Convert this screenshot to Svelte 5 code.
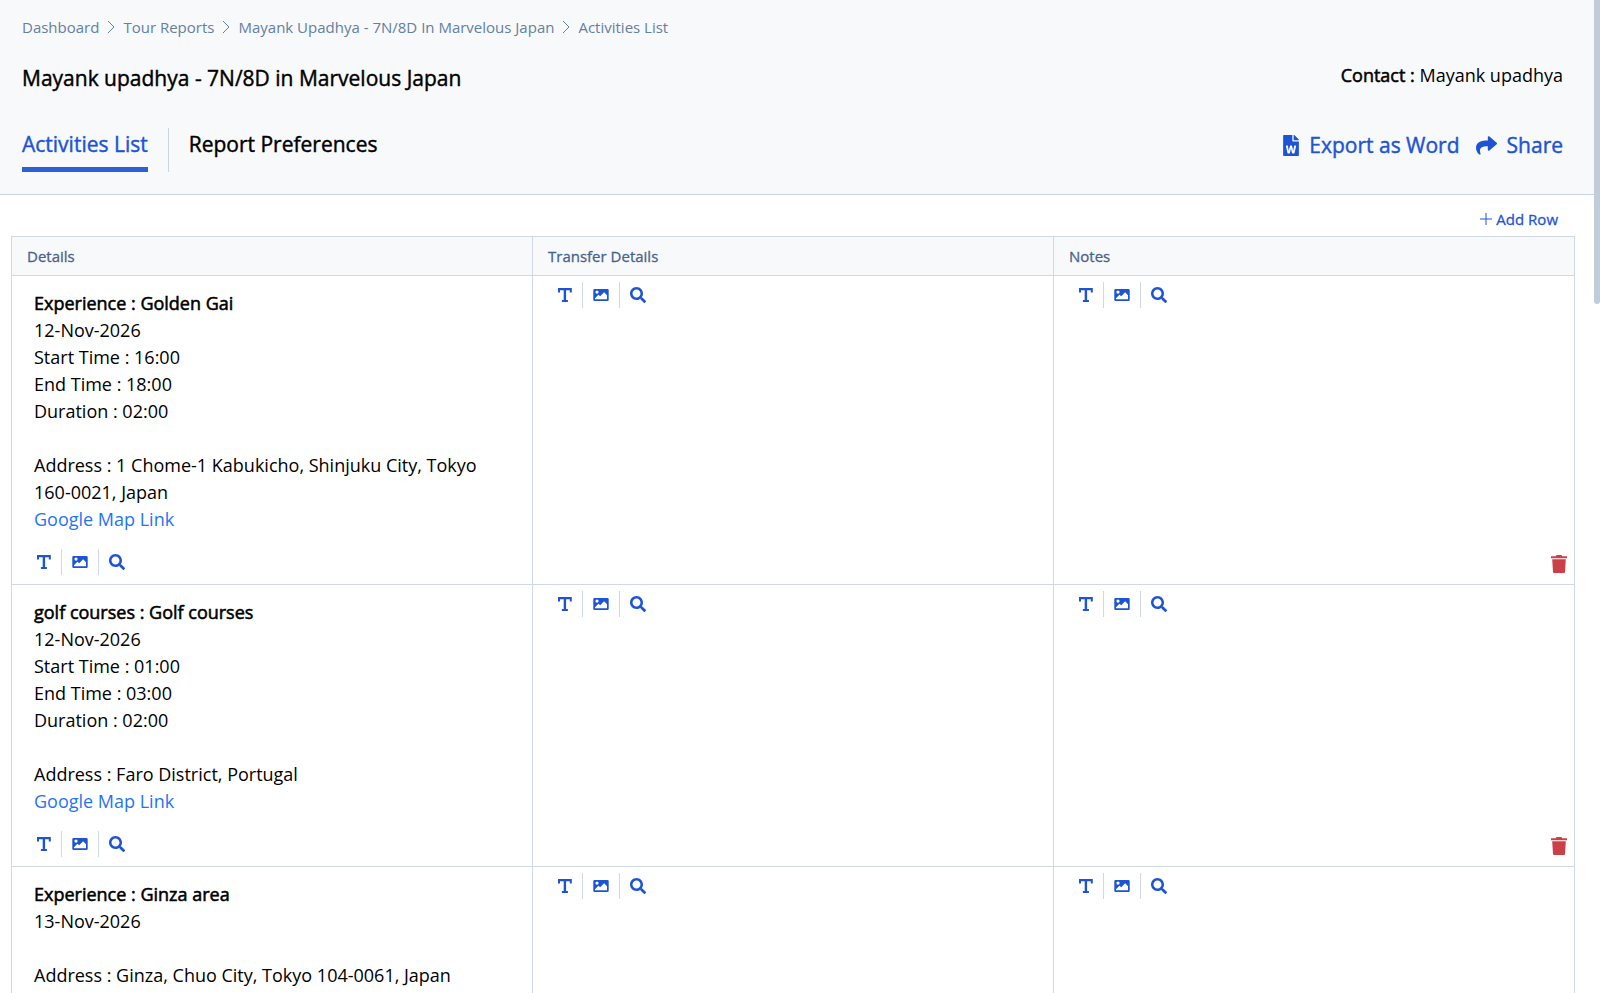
<script>
	let activeTab = "Activities List";

	const crumbs = ["Dashboard", "Tour Reports", "Mayank Upadhya - 7N/8D In Marvelous Japan", "Activities List"];
	const tabs = ["Activities List", "Report Preferences"];
	const columns = ["Details", "Transfer Details", "Notes"];

	let activities = [
		{
			title: "Experience : Golden Gai",
			date: "12-Nov-2026",
			start: "16:00",
			end: "18:00",
			duration: "02:00",
			address: "1 Chome-1 Kabukicho, Shinjuku City, Tokyo 160-0021, Japan",
			map: "#map-golden-gai"
		},
		{
			title: "golf courses : Golf courses",
			date: "12-Nov-2026",
			start: "01:00",
			end: "03:00",
			duration: "02:00",
			address: "Faro District, Portugal",
			map: "#map-golf-courses"
		},
		{
			title: "Experience : Ginza area",
			date: "13-Nov-2026",
			address: "Ginza, Chuo City, Tokyo 104-0061, Japan"
		}
	];

	function addRow() {
		activities = [...activities, { title: "", date: "", address: "" }];
	}

	function removeRow(index) {
		activities = activities.filter((_, i) => i !== index);
	}
</script>

{#snippet toolbar()}
	<div class="toolbar">
		<button aria-label="Add text">
			<svg width="16" height="16" viewBox="0 0 16 16">
				<path d="M2 1h13.800v4.400h-2V3.200H10.100v9.900H11.900v2H5.900v-2H7.700V3.200H4v2.200H2z" />
			</svg>
		</button>
		<button aria-label="Add image">
			<svg width="16" height="16" viewBox="0 0 16 16">
				<path fill-rule="evenodd" d="M1.500 2h13A1.200 1.200 0 0 1 15.700 3.200v9.600a1.200 1.200 0 0 1-1.200 1.200h-13A1.200 1.200 0 0 1 .3 12.800V3.200A1.200 1.200 0 0 1 1.500 2zM4 3.500a1.600 1.600 0 1 0 0 3.200 1.600 1.600 0 0 0 0-3.200zM2 11.300v1h12V8.200l-2.900-2.900L7.200 9.300 5.400 7.700z" />
			</svg>
		</button>
		<button aria-label="Search">
			<svg width="16" height="16" viewBox="0 0 512 512">
				<path d="M505 442.700L405.300 343c-4.500-4.500-10.600-7-17-7H372c27.600-35.300 44-79.700 44-128C416 93.100 322.900 0 208 0S0 93.100 0 208s93.100 208 208 208c48.300 0 92.700-16.400 128-44v16.300c0 6.400 2.500 12.500 7 17l99.700 99.700c9.400 9.400 24.600 9.400 33.900 0l28.300-28.300c9.400-9.400 9.400-24.600.1-34zM208 336c-70.700 0-128-57.200-128-128 0-70.700 57.200-128 128-128 70.700 0 128 57.200 128 128 0 70.700-57.200 128-128 128z" />
			</svg>
		</button>
	</div>
{/snippet}

<div class="page">
	<header>
		<nav class="breadcrumb" aria-label="Breadcrumb">
			{#each crumbs as crumb, i}
				{#if i > 0}
					<svg width="8" height="14" viewBox="0 0 8 14">
						<path d="M1 1l6 6-6 6" />
					</svg>
				{/if}
				<a href="#{i}">{crumb}</a>
			{/each}
		</nav>

		<div class="title-row">
			<h1>Mayank upadhya - 7N/8D in Marvelous Japan</h1>
			<p><b>Contact :</b> Mayank upadhya</p>
		</div>

		<div class="tab-row">
			<div class="tabs">
				{#each tabs as tab}
					<div class="tab">
						<button class:active={activeTab === tab} on:click={() => (activeTab = tab)}>{tab}</button>
					</div>
				{/each}
			</div>
			<div class="actions">
				<button>
					<svg width="16" height="21" viewBox="0 0 384 512">
						<path d="M224 136V0H24C10.700 0 0 10.700 0 24v464c0 13.300 10.700 24 24 24h336c13.300 0 24-10.700 24-24V160H248c-13.200 0-24-10.800-24-24zm57.100 120H305c7.700 0 13.400 7.100 11.700 14.700l-38 168c-1.200 5.500-6.100 9.300-11.700 9.300h-38c-5.500 0-10.300-3.800-11.600-9.100-25.800-103.500-20.800-81.200-25.600-110.500h-.5c-1.100 14.300-2.400 17.400-25.600 110.500-1.300 5.300-6.100 9.100-11.600 9.100H117c-5.600 0-10.500-3.900-11.700-9.400l-37.800-168c-1.700-7.500 4-14.600 11.700-14.600h24.500c5.700 0 10.700 4 11.800 9.700 15.600 78 20.100 109.500 21 122.200 1.600-10.200 7.300-32.700 29.400-122.700 1.300-5.400 6.100-9.100 11.700-9.100h29.100c5.600 0 10.400 3.800 11.700 9.200 24 100.400 28.800 124 29.600 129.400-.2-11.200-2.600-17.800 21.600-129.200 1-5.600 5.900-9.500 11.500-9.500zM384 121.900v6.100H256V0h6.100c6.400 0 12.500 2.500 17 7l97.900 98c4.500 4.500 7 10.600 7 16.900z" />
					</svg>
					Export as Word
				</button>
				<button>
					<svg width="21" height="21" viewBox="0 0 512 512">
						<path d="M503.700 189.800L327.700 37.900C312.300 24.500 288 35.300 288 56v80C127.400 137.900 0 170.100 0 322.300c0 61.400 39.600 122.300 83.300 154.100 13.700 9.900 33.100-2.500 28.100-18.600C66.100 312.800 132.900 274.300 288 272.100V360c0 20.700 24.300 31.500 39.700 18.200l176-152c11.100-9.600 11.100-26.800 0-36.400z" />
					</svg>
					Share
				</button>
			</div>
		</div>
	</header>

	<main>
		<div class="add-row">
			<button on:click={addRow}>
				<svg width="12" height="12" viewBox="0 0 12 12"><path d="M6 0v12M0 6h12" /></svg>
				Add Row
			</button>
		</div>

		<table>
			<thead>
				<tr>
					{#each columns as column}
						<th>{column}</th>
					{/each}
				</tr>
			</thead>
			<tbody>
				{#each activities as item, i}
					<tr>
						<td class="details">
							<div class="text">
								<b>{item.title}</b>
								<div>{item.date}</div>
								{#if item.start}
									<div>Start Time : {item.start}</div>
									<div>End Time : {item.end}</div>
									<div>Duration : {item.duration}</div>
								{/if}
								<div class="address">Address : {item.address}</div>
								{#if item.map}
									<a href={item.map}>Google Map Link</a>
								{/if}
							</div>
							{@render toolbar()}
						</td>
						<td>{@render toolbar()}</td>
						<td>
							{@render toolbar()}
							<button class="delete" aria-label="Delete row" on:click={() => removeRow(i)}>
								<svg width="16" height="18" viewBox="0 0 16 18">
									<path d="M5.500 0h5l.6 1.200H16v2H0v-2h4.900zM1.200 4.300h13.600L14 17a1 1 0 0 1-1 1H3a1 1 0 0 1-1-1z" />
								</svg>
							</button>
						</td>
					</tr>
				{/each}
			</tbody>
		</table>
	</main>
	<div class="scroll-thumb"></div>
</div>

<style>
	:global(body) {
		background: #fff;
	}

	.page {
		position: relative;
		height: 100vh;
		overflow: hidden;
		padding-right: 6px;
		box-sizing: border-box;
		font-family: "Open Sans", "Noto Sans", sans-serif;
		font-size: 18px;
		line-height: 27px;
		color: #000;
	}

	button {
		display: flex;
		align-items: center;
		padding: 0;
		border: 0;
		background: none;
		font: inherit;
		color: #1d54d4;
		cursor: pointer;
	}

	a {
		color: #1f75f5;
		text-decoration: none;
	}

	svg {
		display: block;
		flex: none;
		fill: currentColor;
	}

	header {
		background: #f8f9fb;
		border-bottom: 1px solid #cbd5e1;
		padding: 15px 31px 22px 22px;
	}

	.breadcrumb {
		display: flex;
		align-items: center;
		gap: 8px;
		font-size: 15px;
		line-height: 24px;
		color: #64809f;
	}

	.breadcrumb a {
		color: inherit;
	}

	.breadcrumb svg {
		fill: none;
		stroke: currentColor;
	}

	.title-row {
		display: flex;
		justify-content: space-between;
		margin-top: 23px;
	}

	h1 {
		margin: 0;
		font-size: 21px;
		line-height: 32px;
		font-weight: 400;
	}

	p {
		margin: 0;
	}

	b {
		display: block;
		font-weight: 400;
		-webkit-text-stroke: 0.03em currentColor;
	}

	p b {
		display: inline;
	}

	h1,
	.tab-row button,
	.add-row button,
	th {
		-webkit-text-stroke: 0.02em currentColor;
	}

	.tab-row {
		display: flex;
		justify-content: space-between;
		margin-top: 34px;
		font-size: 21px;
		line-height: 32px;
	}

	.tabs {
		display: flex;
	}

	.tab + .tab {
		margin-left: 20px;
		padding-left: 20px;
		border-left: 1px solid #cbd5e1;
	}

	.tab button {
		height: 44px;
		padding-bottom: 8px;
		border-bottom: 5px solid transparent;
		box-sizing: border-box;
		color: #000;
	}

	.tab button.active {
		color: #1d54d4;
		border-color: #2f5fd6;
	}

	.actions {
		display: flex;
		align-items: flex-start;
		gap: 16px;
		padding-top: 1px;
	}

	.actions button {
		gap: 10px;
	}

	.add-row {
		display: flex;
		justify-content: flex-end;
		padding: 12px 36px 5px 0;
	}

	.add-row button {
		gap: 4px;
		font-size: 15px;
		line-height: 24px;
	}

	.add-row svg {
		stroke: currentColor;
	}

	table {
		width: calc(100% - 30px);
		margin-left: 11px;
		table-layout: fixed;
		border-collapse: collapse;
	}

	th,
	td {
		border: 1px solid #cfd8e3;
	}

	th {
		height: 38px;
		padding: 0 15px;
		background: #f8f9fb;
		color: #48638a;
		font-size: 15px;
		line-height: 24px;
		font-weight: 400;
		text-align: left;
	}

	td {
		position: relative;
		padding: 6px 13px;
		vertical-align: top;
	}

	td.details {
		padding: 14px 13px 9px;
	}

	.text {
		padding: 0 9px;
		margin-bottom: 16px;
	}

	.address {
		margin-top: 27px;
	}

	.toolbar {
		display: flex;
	}

	.toolbar button {
		padding: 5px 10px;
	}

	.toolbar button + button {
		border-left: 1px solid #cfd8e3;
	}

	.delete {
		position: absolute;
		right: 7px;
		bottom: 11px;
		color: #cb4048;
	}

	.scroll-thumb {
		position: absolute;
		top: 0;
		right: 0;
		width: 6px;
		height: 304px;
		background: #c1ccda;
		border-radius: 0 0 4px 4px;
	}
</style>
